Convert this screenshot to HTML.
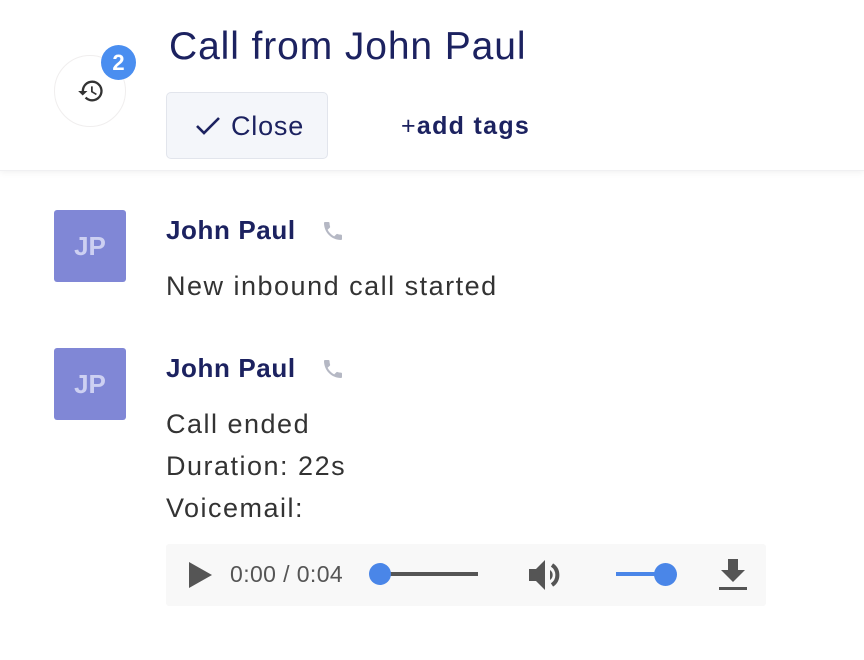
<!DOCTYPE html>
<html><head><style>
body{margin:0;width:864px;height:660px;background:#fff;font-family:"Liberation Sans",sans-serif;position:relative;overflow:hidden}
.hdr{position:absolute;left:0;top:0;width:864px;height:170px;background:#fff;box-shadow:0 2px 6px rgba(0,0,0,0.05);border-bottom:1px solid #f0f0f2}
.circ{position:absolute;left:54px;top:55px;width:70px;height:70px;border:1px solid #f0eeee;border-radius:50%;background:#fff}
.badge{position:absolute;left:101px;top:45px;width:35px;height:35px;border-radius:50%;background:#4a8ef0;color:#fff;font-weight:bold;font-size:22px;text-align:center;line-height:35px}
.title{position:absolute;left:169px;top:25px;font-size:39px;letter-spacing:0.9px;color:#1c2260}
.btn{position:absolute;left:166px;top:92px;width:162px;height:67px;background:#f4f6fa;border:1px solid #e2e5ec;border-radius:5px;box-sizing:border-box}
.btn span{position:absolute;left:64px;top:18px;font-size:27px;letter-spacing:0.8px;color:#1c2260}
.tags{position:absolute;left:401px;top:112px;font-size:25px;letter-spacing:1.3px;color:#1c2260;font-weight:bold}
.av{position:absolute;left:54px;width:72px;height:72px;background:#8087d6;border-radius:3px;color:#cdd0f2;font-weight:bold;font-size:26px;text-align:center;line-height:72px}
.name{position:absolute;left:166px;font-size:26px;letter-spacing:0.6px;font-weight:bold;color:#1c2260}
.ph{position:absolute;left:321px}
.txt{position:absolute;left:166px;font-size:27px;letter-spacing:1.5px;color:#333;line-height:42px}
.player{position:absolute;left:166px;top:544px;width:600px;height:62px;background:#f8f8f8;border-radius:3px}
</style></head><body>
<div class="hdr">
<div class="circ"><svg style="position:absolute;left:22px;top:21px" width="28" height="28" viewBox="0 0 24 24"><path fill="#333" d="M13 3a9 9 0 0 0-9 9H1l3.9 3.9L9 12H6a7 7 0 1 1 2.05 4.95l-1.42 1.42A9 9 0 1 0 13 3zm-1 5v5l4.28 2.54.72-1.21-3.5-2.08V8z"/></svg></div>
<div class="badge">2</div>
<div class="title">Call from John Paul</div>
<div class="btn"><svg style="position:absolute;left:28px;top:22px" width="26" height="22" viewBox="0 0 26 22"><path d="M2 11l7 7L24 3" stroke="#1c2260" stroke-width="2.6" fill="none"/></svg><span>Close</span></div>
<div class="tags"><span style="font-weight:normal">+</span>add tags</div>
</div>

<div class="av" style="top:210px">JP</div>
<div class="name" style="top:215px">John Paul</div>
<svg class="ph" style="top:219px" width="24" height="24" viewBox="0 0 24 24"><path fill="#b5b8c4" d="M6.6 10.8c1.4 2.8 3.8 5.1 6.6 6.6l2.2-2.2c.3-.3.7-.4 1-.2 1.1.4 2.3.6 3.6.6.6 0 1 .4 1 1V20c0 .6-.4 1-1 1C10.6 21 3 13.4 3 4c0-.6.4-1 1-1h3.5c.6 0 1 .4 1 1 0 1.2.2 2.4.6 3.6.1.3 0 .7-.2 1z"/></svg>
<div class="txt" style="top:265px">New inbound call started</div>

<div class="av" style="top:348px">JP</div>
<div class="name" style="top:353px">John Paul</div>
<svg class="ph" style="top:357px" width="24" height="24" viewBox="0 0 24 24"><path fill="#b5b8c4" d="M6.6 10.8c1.4 2.8 3.8 5.1 6.6 6.6l2.2-2.2c.3-.3.7-.4 1-.2 1.1.4 2.3.6 3.6.6.6 0 1 .4 1 1V20c0 .6-.4 1-1 1C10.6 21 3 13.4 3 4c0-.6.4-1 1-1h3.5c.6 0 1 .4 1 1 0 1.2.2 2.4.6 3.6.1.3 0 .7-.2 1z"/></svg>
<div class="txt" style="top:403px">Call ended<br>Duration: 22s<br>Voicemail:</div>

<div class="player">
<svg style="position:absolute;left:20px;top:16px" width="30" height="30" viewBox="0 0 30 30"><path d="M3 2L26 15L3 28z" fill="#555"/></svg>
<div style="position:absolute;left:64px;top:17px;font-size:23px;letter-spacing:0.4px;color:#555">0:00 / 0:04</div>
<div style="position:absolute;left:212px;top:28px;width:100px;height:4px;background:#555"></div>
<div style="position:absolute;left:203px;top:19px;width:22px;height:22px;border-radius:50%;background:#4a86e8"></div>
<svg style="position:absolute;left:362px;top:13px" width="38" height="36" viewBox="0 0 38 36"><path d="M1 12h7l9-9v30l-9-9H1z" fill="#555"/><path d="M24 8a12 12 0 0 1 0 20" stroke="#555" stroke-width="4" fill="none"/><path d="M22 13a6 6 0 0 1 0 10z" fill="#555"/></svg>
<div style="position:absolute;left:450px;top:28px;width:45px;height:4px;background:#4a86e8"></div>
<div style="position:absolute;left:488px;top:19px;width:23px;height:23px;border-radius:50%;background:#4a86e8"></div>
<svg style="position:absolute;left:552px;top:15px" width="30" height="32" viewBox="0 0 30 32"><path d="M10 0h10v11h7L15 23 3 11h7z" fill="#555"/><rect x="1" y="28" width="28" height="3" fill="#555"/></svg>
</div>
</body></html>
